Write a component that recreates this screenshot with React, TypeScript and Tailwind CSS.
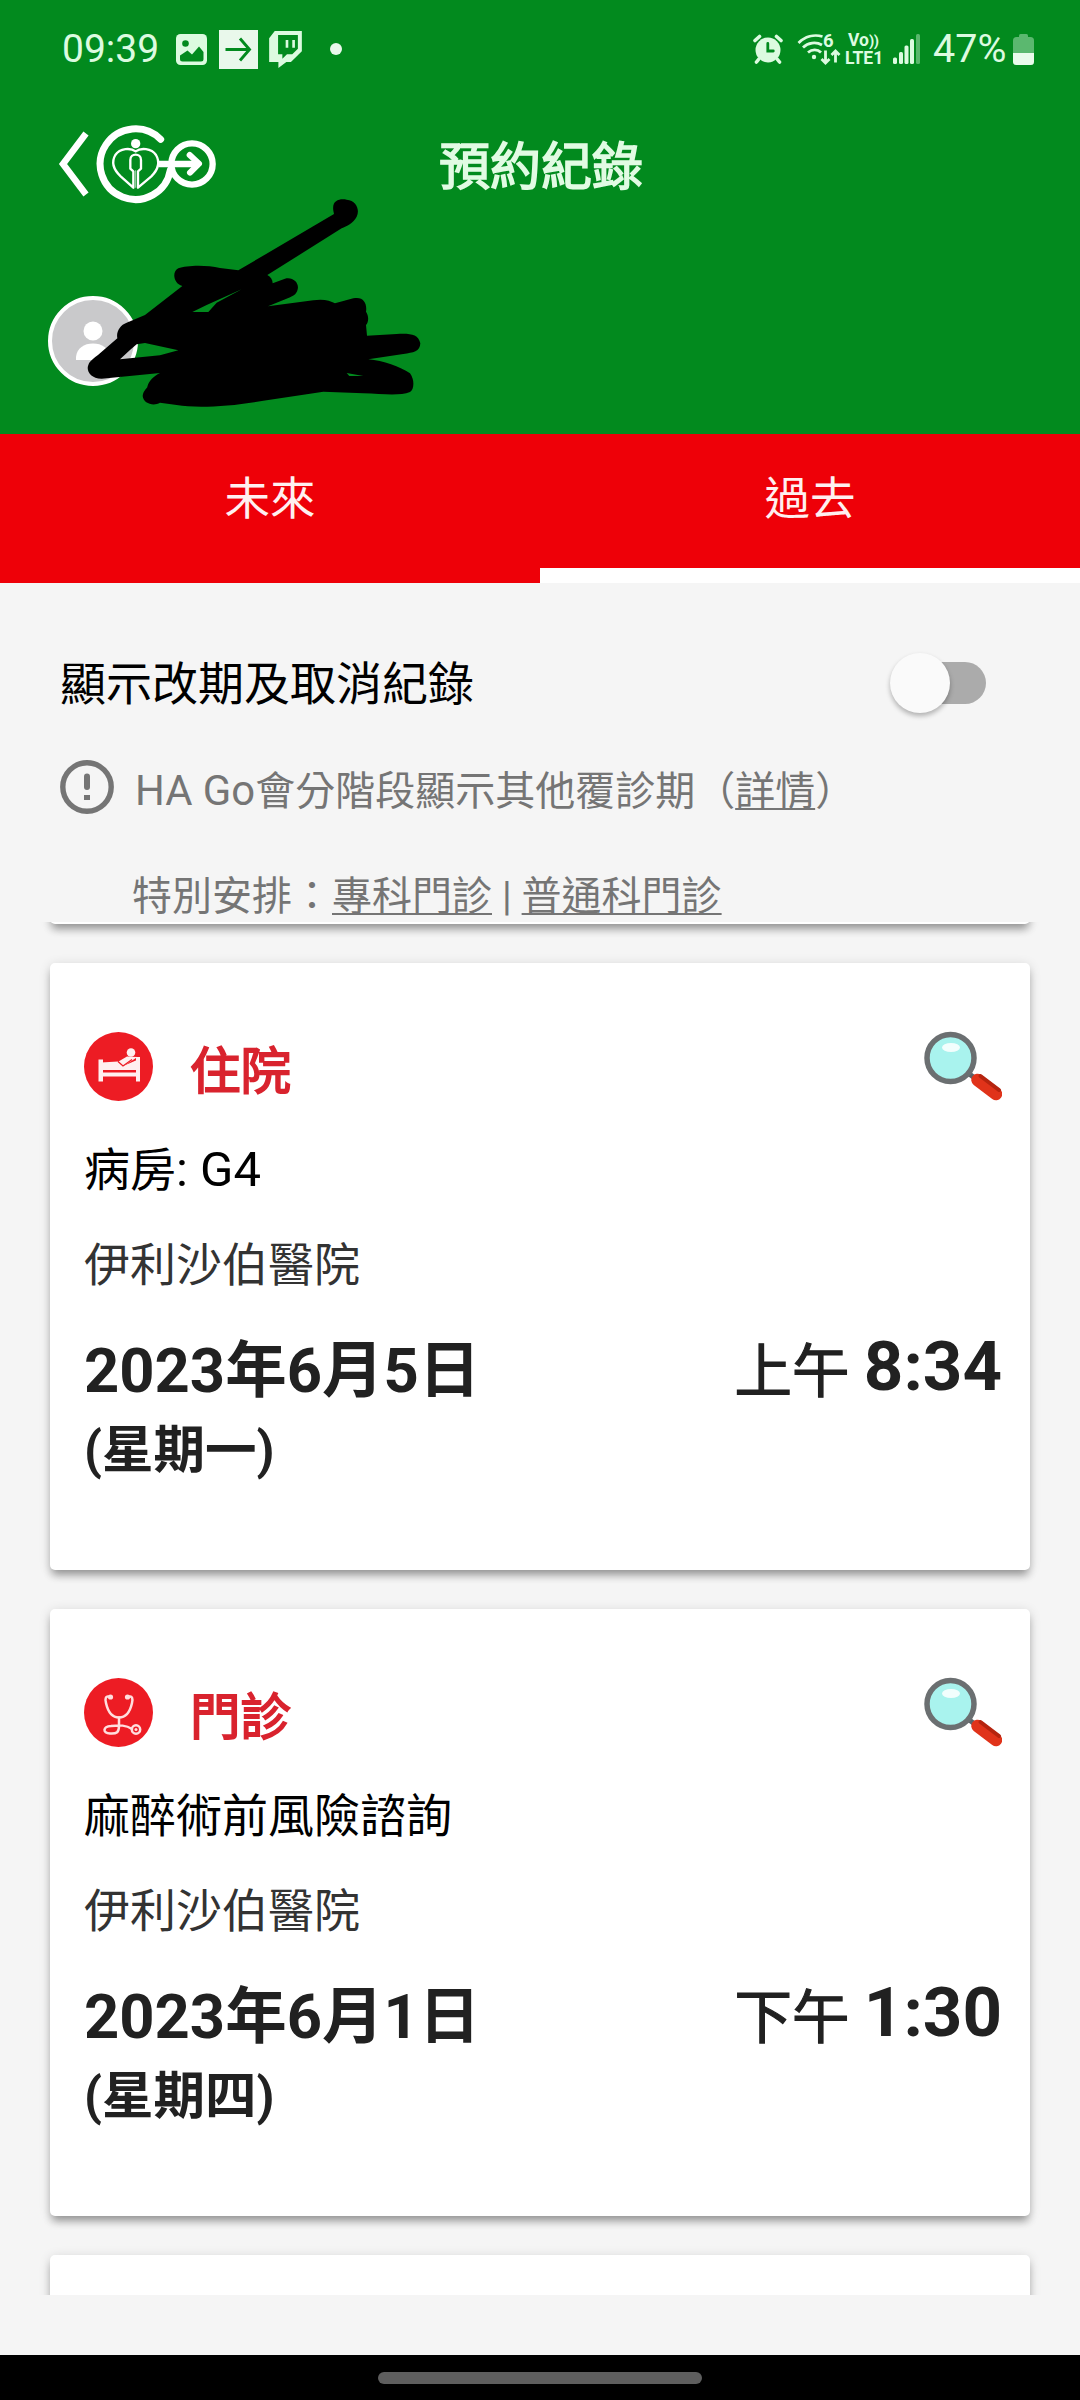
import React from 'react';

interface Appointment {
  id: number;
  kind: 'ward' | 'clinic';
  title: string;
  detail: string;
  code?: string;
  hospital: string;
  date: string;
  weekday: string;
  period: string;
  time: string;
}

const appointments: Appointment[] = [
  {
    id: 1,
    kind: 'ward',
    title: '住院',
    detail: '病房',
    code: ': G4',
    hospital: '伊利沙伯醫院',
    date: '2023年6月5日',
    weekday: '(星期一)',
    period: '上午',
    time: '8:34',
  },
  {
    id: 2,
    kind: 'clinic',
    title: '門診',
    detail: '麻醉術前風險諮詢',
    hospital: '伊利沙伯醫院',
    date: '2023年6月1日',
    weekday: '(星期四)',
    period: '下午',
    time: '1:30',
  },
];

const StatusBar: React.FC = () => (
  <div className="flex h-[98px] items-center justify-between pl-[62px] pr-[46px] text-[#dcfbe0]">
    <div className="flex items-center">
      <span className="w-[114px] text-[39px] leading-none">09:39</span>
      <svg className="h-[31px] w-[31px]" viewBox="0 0 31 31">
        <rect width="31" height="31" rx="4.500" fill="currentColor" />
        <circle cx="9.500" cy="9.500" r="3.300" fill="#028a1e" />
        <path d="M4 21.500L11.500 16.500L16 20.500L23 12.500L27.500 18V25Q27.500 27.500 25 27.500H6.500Q4 27.500 4 25z" fill="#028a1e" />
      </svg>
      <svg className="ml-3 h-[39px] w-[39px]" viewBox="0 0 39 39">
        <rect width="39" height="39" fill="#e9f8eb" />
        <path d="M6.500 19.500h23M21 8.500l9.500 11-9.500 11" fill="none" stroke="#028a1e" strokeWidth="2.900" />
      </svg>
      <svg className="ml-[11px] h-[37px] w-[33px]" viewBox="0 0 99 112" fill="currentColor">
        <path
          fillRule="evenodd"
          d="M17 0H99V61L66 94H52L28 112V94H0V22zM27 12V70H40V84L54 70H70L87 54V12z"
        />
        <path d="M50 27h8v24h-8zM70 27h8v24h-8z" />
      </svg>
      <span className="ml-7 h-3 w-3 rounded-full bg-[#e9f8eb]" />
    </div>
    <div className="flex items-center">
      <svg className="h-[30px] w-[30px]" viewBox="0 0 30 30" fill="none" stroke="currentColor" strokeLinecap="round">
        <circle cx="15" cy="16" r="12.500" fill="currentColor" stroke="none" />
        <path d="M2 6.500L6.500 2.500M28 6.500L23.500 2.500M5.500 25.500L3.500 28M24.500 25.500L26.500 28" strokeWidth="3.600" />
        <path d="M14.800 9.500v7.500h5.500" stroke="#028a1e" strokeWidth="2.800" />
      </svg>
      <div className="relative ml-[14px] h-[33px] w-[44px]">
        <svg className="h-[33px] w-[44px]" viewBox="0 0 44 33" fill="none" stroke="currentColor" strokeWidth="2.800">
          <path d="M1.500 10C8 3.500 17 1 25.500 3.500" />
          <path d="M6 14.500C11 9.500 19 8.500 25 12" />
          <path d="M11 19.500c4-3.500 9.500-3.500 13 0" />
          <circle cx="17" cy="24" r="2.200" fill="currentColor" stroke="none" />
          <path d="M28.500 17.500v12M24.500 26l4 4 4-4" />
          <path d="M38.500 29.500V19M34.500 22l4-4 4 4" />
        </svg>
        <span className="absolute left-[26px] top-[-3px] text-[18.5px] font-bold leading-[22px]">6</span>
      </div>
      <div className="ml-1 flex w-[43px] flex-col text-[17.5px] font-bold leading-[17px]">
        <span className="pl-[3px]">Vo<span className="text-[15px] tracking-[-0.500px]">))</span></span>
        <span>LTE1</span>
      </div>
      <svg className="ml-[5px] h-[30px] w-[28px]" viewBox="0 0 28 30" fill="currentColor">
        <rect x="0" y="23.500" width="4" height="6.500" rx="1.500" />
        <rect x="6" y="18" width="4" height="12" rx="1.500" />
        <rect x="11.500" y="11.500" width="4" height="18.500" rx="1.500" />
        <rect x="17" y="5" width="4" height="25" rx="1.500" />
        <rect x="23" y="0" width="4" height="30" rx="1.500" opacity="0.400" />
      </svg>
      <span className="ml-3 w-[80px] text-[39.5px] leading-none">47%</span>
      <svg className="h-[33px] w-[21px]" viewBox="0 0 21 33">
        <path d="M6 2.500Q6 1 7.500 1h6Q15 1 15 2.500V4H6z" fill="#5bb86f" />
        <rect x="0" y="4" width="21" height="28" rx="3.500" fill="#5bb86f" />
        <path d="M0 20H21V28.500Q21 32 17.500 32H3.500Q0 32 0 28.500z" fill="#e9fbeb" />
      </svg>
    </div>
  </div>
);

const GoLogo: React.FC = () => (
  <svg className="ml-[6px] h-[80px] w-[122px]" viewBox="165 42 366 240" fill="none" stroke="white" strokeLinecap="round" strokeLinejoin="round">
    <path d="M362 88A106 106 0 1 0 391 180" strokeWidth="21" />
    <circle cx="456" cy="162" r="62" strokeWidth="19" />
    <path d="M356 162H478" strokeWidth="19" strokeLinecap="butt" />
    <path d="M449 135L477 161L450 188" strokeWidth="18" />
    <circle cx="287" cy="101" r="14" fill="white" stroke="none" />
    <path d="M287 124C272 113 240 114 226 135C213 157 222 180 242 199L280 233V184L271 176V150C271 139 279 134 287 134C295 134 303 139 303 150V176L294 184V233L334 199C353 180 361 157 348 135C334 114 302 113 287 124" strokeWidth="7" />
    <path d="M287 182V232" strokeWidth="2" />
  </svg>
);

const Header: React.FC = () => (
  <header className="relative h-[434px] bg-[#028a1e]">
    <StatusBar />
    <div className="grid h-[132px] grid-cols-[1fr_auto_1fr] items-center">
      <div className="flex items-center pl-[58px]">
        <svg className="h-[66px] w-[31px]" viewBox="0 0 31 66" fill="none" stroke="white" strokeWidth="6.500">
          <path d="M28 2.500L5 33L28 63.500" />
        </svg>
        <GoLogo />
      </div>
      <h1 className="pl-[2px] pt-[7px] text-[51px] leading-none text-[#e1fbe3] [-webkit-text-stroke:1.6px_#e1fbe3]">預約紀錄</h1>
    </div>
    <div className="mt-[66px] ml-12 h-[90px] w-[90px] overflow-hidden rounded-full border-4 border-white bg-[#c9c9cb]">
      <svg className="h-full w-full" viewBox="0 0 82 82" fill="white">
        <circle cx="41" cy="31" r="9.500" />
        <path d="M24 60V57C25 48 32 43.500 41 43.500S57 48 58 57V60z" />
      </svg>
    </div>
    {/* Marker strokes over the patient name */}
    <svg className="absolute left-[30px] top-[190px] h-[240px] w-[410px]" viewBox="0 0 1230 720">
      <path
        fillRule="evenodd"
        d="M910 62C905 30 930 25 950 29C980 32 990 60 980 80C970 100 950 108 935 115L712 255C722 260 728 270 728 280L765 266C790 260 808 280 803 298C800 315 785 320 775 324L714 349L850 331C880 326 900 332 915 340L970 325C1000 318 1012 340 1008 365C1018 380 1015 398 1008 405L1011 437L1100 432C1140 430 1165 432 1171 460C1170 485 1150 488 1120 492L1015 508C1060 512 1110 530 1140 550C1155 570 1152 600 1140 606C1110 618 1060 612 1000 610L880 605L700 632C600 650 500 655 440 645L390 638C370 650 340 640 338 618C340 600 352 595 352 590C358 570 370 560 390 549L215 566C180 566 168 540 175 525C180 510 200 500 210 490L262 445C258 425 270 405 290 398L345 375L457 288C430 280 425 245 445 235C470 225 530 224 570 234L625 241L912 72ZM320 463L345 459L445 481L390 496L270 508L300 480ZM487 366L530 345L635 298L560 338L535 366ZM950 549L1000 558L958 558Z"
      />
    </svg>
  </header>
);

const Tab: React.FC<{ label: string; active?: boolean }> = ({ label, active }) => (
  <button className="flex h-full flex-1 flex-col justify-between text-[45.5px] leading-none text-[#fff0f0]">
    <span className="flex h-[130px] w-full items-center justify-center pt-[2px]">{label}</span>
    {active && <span className="h-[15px] w-full bg-white" />}
  </button>
);

const Settings: React.FC = () => (
  <section className="h-[339px] pl-[60px] pt-[67px]">
    <div className="flex h-[66px] items-center justify-between pr-[94px]">
      <span className="pt-[2px] text-[46px] leading-none text-black">顯示改期及取消紀錄</span>
      <div className="relative flex h-[60px] w-[96px] items-center justify-end">
        <span className="h-[42px] w-[80px] rounded-full bg-[#ababab]" />
        <span className="absolute left-0 top-0 h-[60px] w-[60px] rounded-full bg-[#fafafa] shadow-[0_3px_5px_rgba(0,0,0,0.28)]" />
      </div>
    </div>
    <div className="mt-[41px] flex h-[60px] items-center text-[40px] text-[#757575]">
      <svg className="h-[54px] w-[54px]" viewBox="0 0 54 54" fill="none" stroke="currentColor">
        <circle cx="27" cy="27" r="24.200" strokeWidth="5.400" />
        <path d="M27 16.500V27" strokeWidth="6" strokeLinecap="round" />
        <path d="M24 35h6v5h-6z" fill="currentColor" stroke="none" />
      </svg>
      <p className="ml-[21px] whitespace-nowrap pt-[7px] leading-none">
        <span className="text-[41.8px] leading-none">HA Go</span>會分階段顯示其他覆診期（<Link>詳情</Link>）
      </p>
    </div>
    <p className="ml-[72px] mt-[53px] whitespace-nowrap text-[40px] leading-[54px] text-[#757575]">
      特別安排：<Link>專科門診</Link> | <Link>普通科門診</Link>
    </p>
  </section>
);

const Link: React.FC<{ children: React.ReactNode }> = ({ children }) => (
  <a className="underline decoration-2 underline-offset-[3px] [text-decoration-skip-ink:none]">{children}</a>
);

const WardIcon: React.FC = () => (
  <svg className="h-[69px] w-[69px]" viewBox="0 0 69 69">
    <circle cx="34.500" cy="34.500" r="34.500" fill="#ed1c24" />
    <g fill="#fff0f0">
      <path d="M14.500 27.500h4.500V49.500h-4.500zM52 25h4V49.500h-4z" />
      <path d="M17 30.500L34 29.500L39 34L45 31.500L53 28V38H17z" />
      <path d="M17 40.500H54V44.500H17z" />
      <circle cx="47" cy="20.500" r="4.300" />
      <path d="M34.500 29.500L43 24.500L53.500 25L43.500 31.500L39 34.500z" />
    </g>
    <path d="M34 29.500L39 34L48 27.500" fill="none" stroke="#ed1c24" strokeWidth="1.300" />
  </svg>
);

const ClinicIcon: React.FC = () => (
  <svg className="h-[69px] w-[69px]" viewBox="0 0 69 69">
    <circle cx="34.500" cy="34.500" r="34.500" fill="#ed1c24" />
    <g fill="none" stroke="#ffdede" strokeWidth="2.500" strokeLinecap="round">
      <path d="M26 19C21 17 21 22 22 25C24 34 28 39.500 35 39.500S46 34 48 25C49 21 48.500 17 44 19" />
      <path d="M35 39.500V48C35 54 33 56 26 55.500C18 55 19 48.500 27 48C36 47 42 47 48 51" />
      <circle cx="52" cy="51.500" r="4.200" />
    </g>
    <g fill="#ffdede">
      <circle cx="26.500" cy="19" r="2.600" />
      <circle cx="43.500" cy="19" r="2.600" />
      <circle cx="52" cy="51.500" r="1.500" />
    </g>
  </svg>
);

const Magnifier: React.FC = () => (
  <svg className="h-[70px] w-[78px]" viewBox="0 0 78 70">
    <path d="M44 42L52 48" stroke="#5b6268" strokeWidth="5" />
    <circle cx="26.500" cy="27" r="23.500" fill="#a9f3ee" stroke="#6b6f71" strokeWidth="5.500" />
    <ellipse cx="27" cy="16.500" rx="9" ry="4.500" fill="white" opacity="0.850" />
    <path d="M53.500 49L72 63" stroke="#e0331a" strokeWidth="12.500" strokeLinecap="round" />
    <path d="M56.500 45L75 59" stroke="#b5240f" strokeWidth="4" strokeLinecap="round" />
  </svg>
);

const AppointmentCard: React.FC<{ item: Appointment }> = ({ item }) => (
  <article className="h-[607px] shrink-0 rounded-[5px] bg-white pl-[34px] pr-[28px] pt-[68px] shadow-[0_7px_9px_-2px_rgba(0,0,0,0.33),0_2px_12px_rgba(0,0,0,0.14)]">
    <div className="flex h-[70px] items-center">
      {item.kind === 'ward' ? <WardIcon /> : <ClinicIcon />}
      <h2 className="ml-[37px] flex-1 pt-[12px] text-[50.5px] leading-none text-[#d9232e] [-webkit-text-stroke:1.8px_#d9232e]">{item.title}</h2>
      <Magnifier />
    </div>
    <p className="mt-[34px] h-[70px] text-[46px] leading-[70px] text-black">
      {item.detail}
      {item.code && <span className="text-[49px]">{item.code}</span>}
    </p>
    <p className="mt-[25px] text-[46px] leading-[70px] text-[#333333]">{item.hospital}</p>
    <div className="mt-[29px] flex h-[84px] items-baseline justify-between text-[#212121]">
      <span className="text-[61.5px] font-bold leading-[80px]">{item.date}</span>
      <span className="text-[57.5px] leading-[80px] [-webkit-text-stroke:1.2px_#212121]">
        {item.period} <span className="relative -top-[2px] text-[69px] font-bold [-webkit-text-stroke:0]">{item.time}</span>
      </span>
    </div>
    <p className="text-[51.5px] font-bold leading-[76px] text-[#212121]">{item.weekday}</p>
  </article>
);

export default function App() {
  return (
    <div className="flex h-[2400px] w-[1080px] flex-col overflow-hidden bg-[#f5f5f5] font-[Roboto,'Noto_Sans_CJK_TC',sans-serif]">
      <Header />
      <nav className="flex h-[149px] bg-[#ee0008]">
        <Tab label="未來" />
        <Tab label="過去" active />
      </nav>
      <Settings />
      <main className="flex h-[1373px] flex-col gap-[39px] overflow-hidden px-[50px]">
        <div className="-mt-[58px] h-[60px] shrink-0 rounded-[5px] bg-white shadow-[0_7px_9px_-2px_rgba(0,0,0,0.33),0_2px_12px_rgba(0,0,0,0.14)]" />
        {appointments.map((item) => (
          <AppointmentCard key={item.id} item={item} />
        ))}
        <div className="h-[607px] shrink-0 rounded-[5px] bg-white shadow-[0_7px_9px_-2px_rgba(0,0,0,0.33),0_2px_12px_rgba(0,0,0,0.14)]" />
      </main>
      <footer className="mt-auto flex h-[45px] justify-center bg-black pt-[17px]">
        <span className="h-3 w-[324px] rounded-full bg-[#5e5e5e]" />
      </footer>
    </div>
  );
}
